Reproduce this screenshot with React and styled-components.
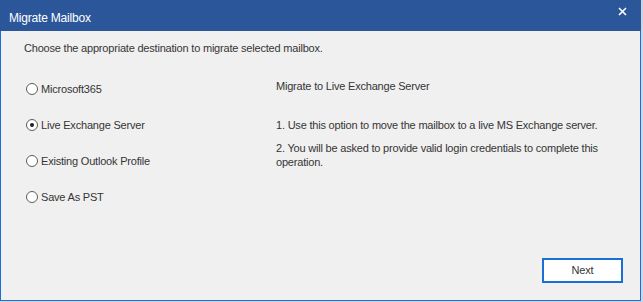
import React, { useState } from "react";
import styled, { createGlobalStyle } from "styled-components";

const Global = createGlobalStyle`
  html, body { margin: 0; padding: 0; background: #c9d6e6; }
  body { font-family: "Liberation Sans", Arial, sans-serif; }
  * { box-sizing: border-box; }
`;

const Window = styled.div`
  width: 641px;
  height: 301px;
  display: flex;
  flex-direction: column;
  background: #f0f0f0;
  border: 1px solid #1a6fd6;
  border-top: none;
`;

const TitleBar = styled.div`
  height: 31px;
  background: #2b579a;
  display: flex;
  align-items: center;
  justify-content: space-between;
  padding: 5px 13px 0 9px;
  margin: 0 -1px;
`;

const Title = styled.span`
  color: #ffffff;
  font-size: 12px;
  letter-spacing: -0.2px;
`;

const CloseButton = styled.span`
  display: flex;
  align-items: center;
  justify-content: center;
  width: 12px;
  height: 12px;
  margin-top: -14px;
`;

const Body = styled.div`
  flex: 1;
  display: flex;
  flex-direction: column;
  padding: 10px 17px 17px 22px;
  color: #353535;
  font-size: 11px;
  letter-spacing: -0.2px;
`;

const Lead = styled.div`
  line-height: 14px;
  padding-left: 1px;
`;

const Columns = styled.div`
  display: grid;
  grid-template-columns: 253px 1fr;
  margin-top: 24px;
`;

const Options = styled.div`
  display: flex;
  flex-direction: column;
  gap: 16px;
  padding-left: 3px;
`;

const OptionRow = styled.label`
  display: flex;
  align-items: center;
  gap: 3px;
  height: 20px;
  cursor: default;
`;

const Circle = styled.span`
  width: 12px;
  height: 12px;
  border-radius: 50%;
  border: 1px solid #5c5c5c;
  background: #ffffff;
  display: flex;
  align-items: center;
  justify-content: center;
  &::after {
    content: "";
    width: 4px;
    height: 4px;
    border-radius: 50%;
    background: ${(p) => (p.$checked ? "#1f1f1f" : "transparent")};
  }
`;

const Info = styled.div`
  display: flex;
  flex-direction: column;
  padding-right: 10px;
`;

const InfoLine = styled.p`
  margin: ${(p) => p.$mt || 0}px 0 0 0;
  line-height: 14px;
`;

const Footer = styled.div`
  margin-top: auto;
  display: flex;
  justify-content: flex-end;
`;

const NextButton = styled.button`
  width: 81px;
  height: 25px;
  background: #ffffff;
  border: 2px solid #1a6fd6;
  color: #353535;
  font-family: inherit;
  font-size: 11px;
  letter-spacing: -0.2px;
  padding: 0 0 1px 0;
`;

const options = [
  "Microsoft365",
  "Live Exchange Server",
  "Existing Outlook Profile",
  "Save As PST",
];

export default function App() {
  const [selected, setSelected] = useState(1);
  return (
    <>
      <Global />
      <Window>
        <TitleBar>
          <Title>Migrate Mailbox</Title>
          <CloseButton>
            <svg width="9" height="9" viewBox="0 0 9 9">
              <path d="M1 1 L8 8 M8 1 L1 8" stroke="#ffffff" strokeWidth="1.6" />
            </svg>
          </CloseButton>
        </TitleBar>
        <Body>
          <Lead>Choose the appropriate destination to migrate selected mailbox.</Lead>
          <Columns>
            <Options>
              {options.map((o, i) => (
                <OptionRow key={o} onClick={() => setSelected(i)}>
                  <Circle $checked={selected === i} />
                  {o}
                </OptionRow>
              ))}
            </Options>
            <Info>
              <InfoLine>Migrate to Live Exchange Server</InfoLine>
              <InfoLine $mt={25}>1. Use this option to move the mailbox to a live MS Exchange server.</InfoLine>
              <InfoLine $mt={9}>2. You will be asked to provide valid login credentials to complete this operation.</InfoLine>
            </Info>
          </Columns>
          <Footer>
            <NextButton>Next</NextButton>
          </Footer>
        </Body>
      </Window>
    </>
  );
}
